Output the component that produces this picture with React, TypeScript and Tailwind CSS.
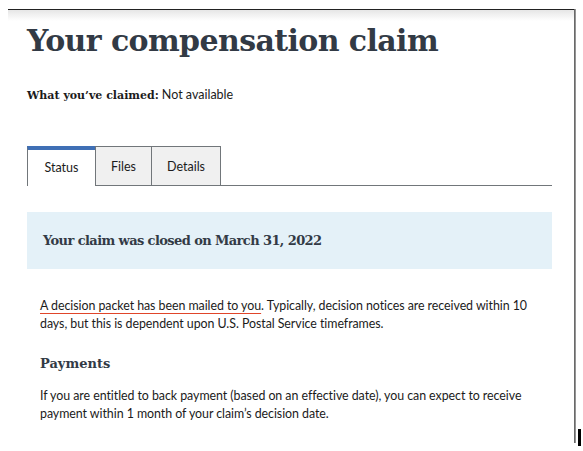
import React from 'react';

const serif = { fontFamily: '"DejaVu Serif", serif' };

export default function App() {
  return (
    <div className="w-[583px] h-[451px] bg-white relative overflow-hidden" style={{ fontFamily: 'Lato, sans-serif' }}>
      {/* screenshot frame */}
      <div className="absolute left-[8px] top-[9px] w-[568px] h-[12px] border-t border-[#222] bg-gradient-to-b from-[#e6e6e6] to-white" />
      <div className="absolute left-[574px] top-[9px] w-[2px] h-[434px] bg-gradient-to-r from-[#555] to-[#aaa]" />
      <div className="absolute left-[578px] top-[429px] w-[3px] h-[17px] bg-black" />

      <div className="relative pl-[27px] pr-[31px] pt-[21px] text-[#1b1b1b]">
        <h1 className="text-[30px] leading-[40px] font-bold text-[#323a45] tracking-[-0.6px]" style={serif}>
          Your compensation claim
        </h1>

        <p className="mt-[25px] text-[12px] leading-[18px]">
          <span className="font-bold text-[11px]" style={serif}>What you’ve claimed:</span>{' '}
          <span className="text-[12.5px]">Not available</span>
        </p>

        <div className="mt-[41px] flex border-b border-[#71767a] h-[40px]">
          <div className="w-[68px] border-t-4 border-[#3f6fb5] border-l border-l-[#71767a] bg-white -mb-px flex items-center justify-center text-[12.5px]">
            Status
          </div>
          <div className="w-[57px] border border-[#71767a] border-b-0 bg-[#f0f0f0] flex items-center justify-center text-[12.5px] pt-[3px]">
            Files
          </div>
          <div className="w-[69px] border border-[#71767a] border-l-0 border-b-0 bg-[#f0f0f0] flex items-center justify-center text-[12.5px] pt-[3px]">
            Details
          </div>
        </div>

        <div className="mt-[26px] h-[57px] bg-[#e4f1f8] flex items-center px-[16px]">
          <h2 className="text-[13px] font-bold text-[#323a45] tracking-[-0.6px]" style={serif}>
            Your claim was closed on March 31, 2022
          </h2>
        </div>

        <div className="px-[13px]">
          <p className="mt-[28px] text-[12.4px] leading-[18px] tracking-[-0.05px]">
            <span className="underline decoration-[#e0452a] underline-offset-[3px]">A decision packet has been mailed to you</span>. Typically, decision notices are received within 10 days, but this is dependent upon U.S. Postal Service timeframes.
          </p>

          <h3 className="mt-[21px] text-[13px] font-bold text-[#323a45]" style={serif}>
            Payments
          </h3>

          <p className="mt-[13px] text-[12.4px] leading-[18px] tracking-[-0.05px]">
            If you are entitled to back payment (based on an effective date), you can expect to receive payment within 1 month of your claim’s decision date.
          </p>
        </div>
      </div>
    </div>
  );
}
